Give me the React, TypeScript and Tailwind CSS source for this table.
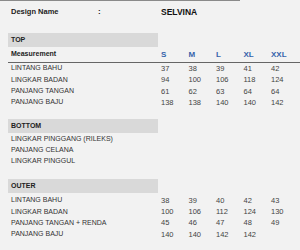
const sizes = ["S", "M", "L", "XL", "XXL"];

type Row = { label: string; values: (number | null)[] };

const top: Row[] = [
  { label: "LINTANG BAHU", values: [37, 38, 39, 41, 42] },
  { label: "LINGKAR BADAN", values: [94, 100, 106, 118, 124] },
  { label: "PANJANG TANGAN", values: [61, 62, 63, 64, 64] },
  { label: "PANJANG BAJU", values: [138, 138, 140, 140, 142] },
];

const bottom: Row[] = [
  { label: "LINGKAR PINGGANG (RILEKS)", values: [null, null, null, null, null] },
  { label: "PANJANG CELANA", values: [null, null, null, null, null] },
  { label: "LINGKAR PINGGUL", values: [null, null, null, null, null] },
];

const outer: Row[] = [
  { label: "LINTANG BAHU", values: [38, 39, 40, 42, 43] },
  { label: "LINGKAR BADAN", values: [100, 106, 112, 124, 130] },
  { label: "PANJANG TANGAN + RENDA", values: [45, 46, 47, 48, 49] },
  { label: "PANJANG BAJU", values: [140, 140, 142, 142, null] },
];

function SectionBar({ title }: { title: string }) {
  return (
    <div className="ml-2 w-[150px] h-[14px] bg-[#d9d9d9] flex items-center pl-[3px]">
      <span className="text-[7px] font-bold text-[#222]">{title}</span>
    </div>
  );
}

function Rows({ rows }: { rows: Row[] }) {
  return (
    <div className="pl-[11px]">
      {rows.map((r) => (
        <div key={r.label} className="flex h-[11.33px] items-center">
          <div className="w-[150px] text-[7px] text-[#333]">{r.label}</div>
          {r.values.map((v, i) => (
            <div key={i} className="w-[27.5px] text-[7.5px] text-[#444]">
              {v ?? ""}
            </div>
          ))}
        </div>
      ))}
    </div>
  );
}

export default function App() {
  return (
    <div
      className="w-[300px] h-[250px] bg-[#f2f2f2] overflow-hidden"
      style={{ fontFamily: '"Liberation Sans", Arial, sans-serif' }}
    >
      <div className="w-[240px] h-px bg-[#8a8a8a]" />
      <div className="flex items-center h-[22px] pl-[11px]">
        <span className="w-[87px] text-[7.5px] font-bold text-[#222]">Design Name</span>
        <span className="w-[63px] text-[8px] font-bold text-[#222]">:</span>
        <span className="text-[8.5px] font-bold text-[#111]">SELVINA</span>
      </div>
      <div className="h-[10px]" />
      <SectionBar title="TOP" />
      <div className="ml-2 flex h-[16px] items-center pl-[3px] border-b border-[#666]">
        <div className="w-[150px] text-[7px] font-bold text-[#222]">Measurement</div>
        {sizes.map((s) => (
          <div key={s} className="w-[27.5px] text-[8px] font-bold text-[#3563ab]">
            {s}
          </div>
        ))}
      </div>
      <Rows rows={top} />
      <div className="h-[11px]" />
      <SectionBar title="BOTTOM" />
      <Rows rows={bottom} />
      <div className="h-[11.5px]" />
      <SectionBar title="OUTER" />
      <div className="h-[2px]" />
      <Rows rows={outer} />
    </div>
  );
}
